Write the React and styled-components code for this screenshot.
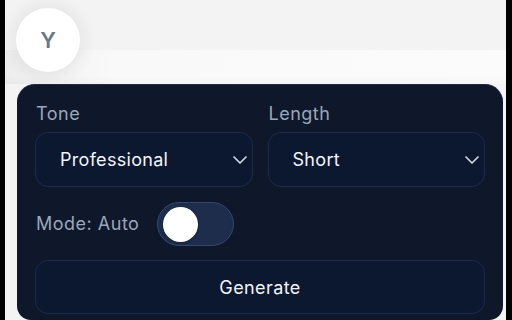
import React, { useState } from "react";
import styled, { createGlobalStyle } from "styled-components";

const GlobalStyle = createGlobalStyle`
  html, body {
    margin: 0;
    padding: 0;
    background: #000;
    font-family: Inter, "Noto Sans", sans-serif;
  }
`;

const Frame = styled.div`
  position: relative;
  width: 501px;
  height: 320px;
  margin-left: 5px;
  overflow: hidden;
  background: #f3f3f4;
  display: flex;
  flex-direction: column;
`;

const TopBar = styled.div`
  height: 50px;
  flex-shrink: 0;
`;

const Band = styled.div`
  height: 34px;
  flex-shrink: 0;
  background: linear-gradient(90deg, #ededee 0%, #f9f9f9 22%, #fbfbfb 100%);
  box-shadow: inset 0 -8px 10px -8px rgba(0, 0, 0, 0.05);
`;

const Avatar = styled.div`
  position: absolute;
  left: 11px;
  top: 8px;
  width: 64px;
  height: 64px;
  border-radius: 50%;
  background: #fff;
  box-shadow: 0 0 14px 6px rgba(0, 0, 0, 0.05);
  display: flex;
  align-items: center;
  justify-content: center;
  color: #6b778c;
  font-size: 22px;
  font-weight: 600;
`;

const Panel = styled.div`
  flex: 1;
  margin: 0 3px 0 12px;
  border-radius: 18px 18px 14px 14px;
  background: #0f172a;
  border-top: 1px solid #1f2b47;
  padding: 19px 18px 0 18px;
  display: flex;
  flex-direction: column;
  gap: 14px;
`;

const Fields = styled.div`
  display: grid;
  grid-template-columns: 1fr 1fr;
  column-gap: 15px;
`;

const Field = styled.div`
  display: flex;
  flex-direction: column;
  gap: 8px;
`;

const Label = styled.span`
  font-size: 18px;
  line-height: 20px;
  letter-spacing: 0.5px;
  color: #9aa7bb;
  padding-left: 1px;
`;

const Select = styled.div`
  height: 55px;
  box-sizing: border-box;
  border-radius: 13px;
  border: 1px solid #1e2c47;
  background: #0c1830;
  display: flex;
  align-items: center;
  justify-content: space-between;
  padding: 0 5px 0 24px;
  color: #f1f5f9;
  font-size: 18px;
  letter-spacing: 0.3px;
`;

const Chevron = () => (
  <svg width="14" height="8" viewBox="0 0 14 8" fill="none" stroke="#cbd5e1" strokeWidth="1.7" strokeLinecap="round" strokeLinejoin="round">
    <path d="M1 1l6 6 6-6" />
  </svg>
);

const ModeRow = styled.div`
  display: flex;
  align-items: center;
  gap: 18px;
  margin-top: 1px;
`;

const Track = styled.button`
  width: 77px;
  height: 44px;
  border-radius: 22px;
  border: 1.5px solid #34466a;
  background: #1e2d4b;
  padding: 0 0 0 5px;
  display: flex;
  align-items: center;
  justify-content: ${(p) => (p.on ? "flex-end" : "flex-start")};
  cursor: pointer;
`;

const Knob = styled.span`
  width: 35px;
  height: 35px;
  border-radius: 50%;
  background: #fff;
  box-shadow: 0 1px 3px rgba(0, 0, 0, 0.3);
`;

const GenerateButton = styled.button`
  height: 54px;
  border-radius: 13px;
  border: 1px solid #1e2c47;
  background: #0c1830;
  color: #f1f5f9;
  font-family: inherit;
  font-size: 18px;
  letter-spacing: 0.4px;
  cursor: pointer;
`;

export default function App() {
  const [auto, setAuto] = useState(false);
  return (
    <>
      <GlobalStyle />
      <Frame>
        <TopBar />
        <Band />
        <Avatar>Y</Avatar>
        <Panel>
          <Fields>
            <Field>
              <Label>Tone</Label>
              <Select>
                Professional
                <Chevron />
              </Select>
            </Field>
            <Field>
              <Label>Length</Label>
              <Select>
                Short
                <Chevron />
              </Select>
            </Field>
          </Fields>
          <ModeRow>
            <Label>Mode: Auto</Label>
            <Track on={auto ? 1 : 0} onClick={() => setAuto(!auto)}>
              <Knob />
            </Track>
          </ModeRow>
          <GenerateButton>Generate</GenerateButton>
        </Panel>
      </Frame>
    </>
  );
}
